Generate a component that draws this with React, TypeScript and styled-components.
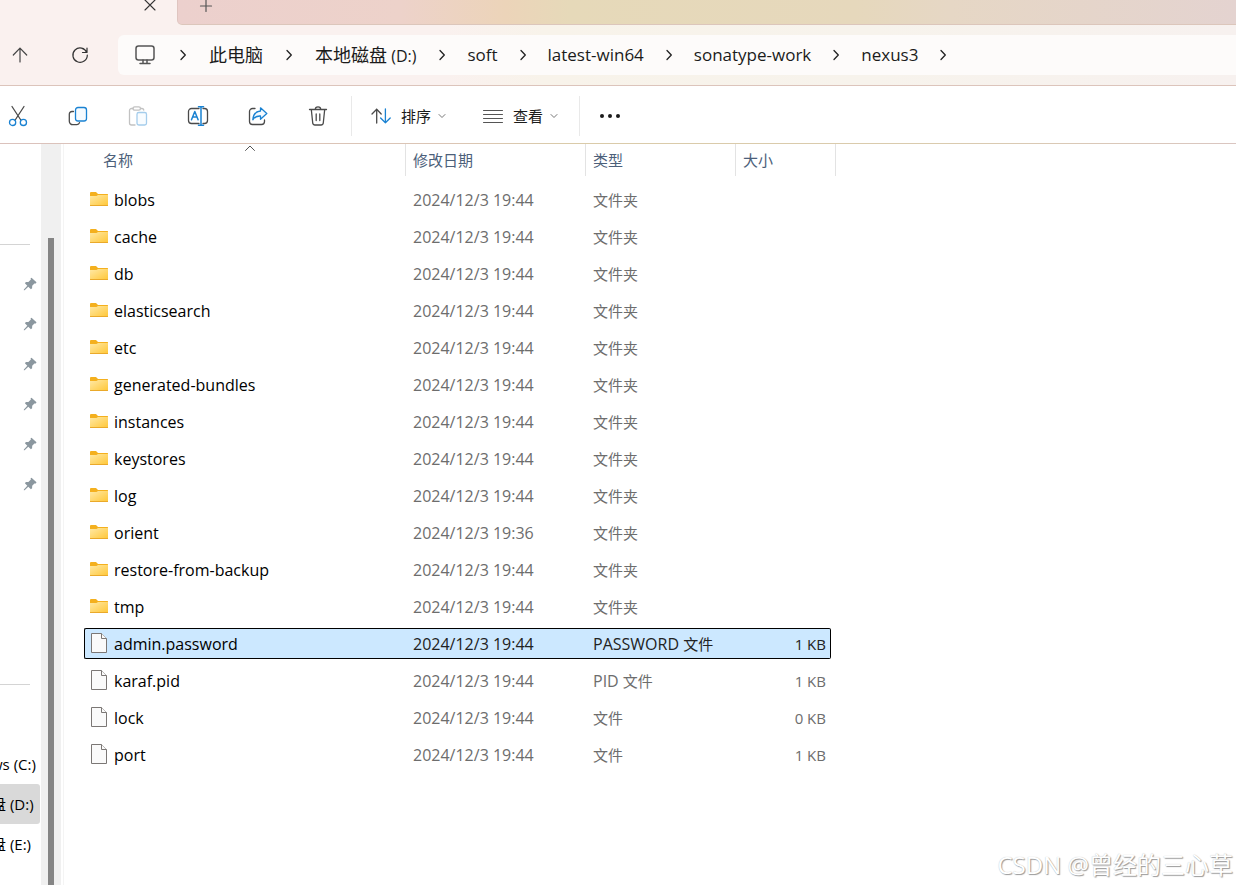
import React from "react";
import styled, { createGlobalStyle, css } from "styled-components";

const GlobalStyle = createGlobalStyle`
  * { box-sizing: border-box; }
  body {
    margin: 0;
    background: #fff;
    font-family: "Open Sans", "Noto Sans CJK SC", sans-serif;
    font-size: 15px;
    line-height: 20px;
    color: #000;
  }
  button { font: inherit; color: inherit; border: 0; background: none; padding: 0; }
  svg { display: block; flex: none; }
`;

const Window = styled.div`
  position: relative;
  min-height: 100vh;
  display: flex;
  flex-direction: column;
  overflow: hidden;
`;

const TabStrip = styled.header`
  display: flex;
  height: 25px;
  background: #faf1ef;
`;

const ActiveTab = styled.div`
  width: 177px;
  display: flex;
  align-items: flex-start;
  justify-content: flex-end;
  padding-right: 20px;
`;

const TabButton = styled.button`
  display: block;
  width: 14px;
  height: 12px;
`;

const TabRest = styled.div`
  flex: 1;
  display: flex;
  align-items: flex-start;
  padding-left: 21px;
  border-left: 1px solid #dfc5c0;
  border-bottom: 1px solid #dcc6bb;
  border-bottom-left-radius: 5px;
  background: linear-gradient(90deg, #ecd0cd 0, #edd2ca 21%, #ecd4b9 31%, #e6d9b9 37%, #e6d8bc 64%, #e6d7c5 73%, #e4d3d0 100%);
`;

const NavBar = styled.div`
  display: flex;
  align-items: center;
  height: 61px;
  background: linear-gradient(90deg, #faf1ef 0, #faf1ef 36%, #f8f3ea 44%, #f7f3ec 70%, #f7f1ef 100%);
  border-bottom: 1px solid #dcc4bb;
`;

const NavButton = styled.button`
  width: 40px;
  height: 40px;
  display: flex;
  align-items: center;
  justify-content: center;
`;

const NavButtons = styled.div`
  display: flex;
  gap: 20px;
  width: 118px;
`;

const AddressBar = styled.nav`
  flex: 1;
  height: 40px;
  display: flex;
  align-items: center;
  padding-left: 17px;
  background: #fdfbfa;
  border-radius: 6px 0 0 6px;
  white-space: nowrap;
  color: #1b1b1b;
`;

const Crumb = styled.a<{ $cjk?: boolean }>`
  margin: 0 ${(p) => (p.$cjk ? 22 : 21)}px;
  font-size: ${(p) => (p.$cjk ? 18 : 17)}px;
  line-height: 24px;
  color: inherit;
  text-decoration: none;
`;

const CrumbLatin = styled.span`
  font-size: 16px;
`;

const TypeLatin = styled.span`
  font-size: 16px;
`;

const ComputerButton = styled.button`
  margin-right: 24px;
`;

const Toolbar = styled.div`
  display: flex;
  align-items: center;
  height: 58px;
  padding-top: 2px;
  border-bottom: 1px solid;
  border-image: linear-gradient(90deg, #dbc2bc 0, #dbc5b5 36%, #dacba9 46%, #dacbad 75%, #dac6c1 100%) 1;
`;

const IconTools = styled.div`
  display: flex;
  margin: 0 3px 0 -12px;
`;

const ToolButton = styled.button`
  width: 60px;
  height: 40px;
  display: flex;
  align-items: center;
  justify-content: center;
`;

const Separator = styled.span`
  width: 1px;
  height: 40px;
  background: #e9e9e9;
`;

const MenuTools = styled.div`
  display: flex;
  gap: 37px;
  padding: 0 21px 0 19px;
`;

const MenuButton = styled.button`
  display: flex;
  align-items: center;
  height: 40px;
  gap: 10px;
  color: #1b1b1b;
`;

const MenuLabel = styled.span`
  display: flex;
  align-items: center;
  gap: 7px;
`;

const Main = styled.main`
  flex: 1;
  display: flex;
`;

const Sidebar = styled.aside`
  width: 41px;
  padding-top: 100px;
  overflow: hidden;
  white-space: nowrap;
`;

const SideRule = styled.hr`
  width: 30px;
  height: 1px;
  margin: 0;
  border: 0;
  background: #d4d4d4;
`;

const PinList = styled.div`
  padding: 19px 0 180px;
`;

const PinRow = styled.div`
  height: 40px;
  display: flex;
  align-items: center;
  justify-content: flex-end;
  padding-right: 4px;
`;

const DriveList = styled.div`
  padding-top: 59px;
`;

const Drive = styled.button<{ $current?: boolean }>`
  display: flex;
  align-items: center;
  width: 49px;
  height: 40px;
  margin-left: -9px;
  border-radius: 3px;
  background: ${(p) => (p.$current ? "#d9d9d9" : "transparent")};
`;

const ScrollTrack = styled.div`
  width: 20px;
  display: flex;
  justify-content: center;
  padding-top: 94px;
  background: #f0f0f0;
`;

const ScrollThumb = styled.div`
  width: 6px;
  background: #858585;
`;

const Content = styled.section`
  flex: 1;
  margin-left: 2px;
  padding-left: 20px;
  border-left: 1px solid #f4f4f4;
`;

const FileTable = styled.table`
  width: 752px;
  table-layout: fixed;
  border-collapse: collapse;
  th, td { padding: 0; font-weight: 400; text-align: left; }
`;

const Col = styled.col<{ $w: number }>`
  width: ${(p) => p.$w}px;
`;

const HeadCell = styled.div<{ $name?: boolean }>`
  position: relative;
  height: 32px;
  margin-bottom: 5px;
  display: flex;
  align-items: center;
  padding-left: ${(p) => (p.$name ? 19 : 7)}px;
  border-right: 1px solid #e3e3e3;
  color: #4c607a;
`;

const SortMark = styled.span`
  position: absolute;
  top: 1px;
  left: 161px;
`;

type CellKind = "name" | "date" | "type" | "size";

const Cell = styled.div<{ $kind: CellKind; $selected?: boolean }>`
  height: 31px;
  margin: 3px 0;
  display: flex;
  align-items: center;
  padding-left: 7px;
  color: ${(p) => (p.$kind === "name" ? "#000" : "#6d6d6d")};
  border: 0 solid #000;
  white-space: pre;
  ${(p) => p.$kind === "date" && css`font-size: 16px;`}
  ${(p) => p.$kind === "name" && css`
    font-size: 16px;
    padding-left: 5px;
    border-left: 1px solid transparent;
  `}
  ${(p) => p.$kind === "size" && css`
    margin-right: 5px;
    padding-right: 4px;
    justify-content: flex-end;
    border-right: 1px solid transparent;
  `}
  ${(p) => p.$selected && css`
    background: #cce8ff;
    color: ${p.$kind === "name" ? "#000" : "#222"};
    border-top: 1px solid #000;
    border-bottom: 1px solid #000;
    ${p.$kind === "name" && "border-left-color: #000; border-radius: 2px 0 0 2px;"}
    ${p.$kind === "size" && "border-right-color: #000; border-radius: 0 2px 2px 0;"}
  `}
`;

const IconSlot = styled.span`
  width: 24px;
  padding-bottom: 2px;
`;

const Watermark = styled.div`
  position: absolute;
  right: 3px;
  bottom: 4px;
  font-size: 24px;
  line-height: 32px;
  color: #fff;
  text-shadow: 1px 1px 1px #999, 0 0 1px #bbb;
`;

const Stroke = ({ w, h, children, color = "#4a4a4a", sw = 1.2 }: {
  w: number; h: number; children: React.ReactNode; color?: string; sw?: number;
}) => (
  <svg width={w} height={h} viewBox={`0 0 ${w} ${h}`} fill="none" stroke={color} strokeWidth={sw} strokeLinecap="round" strokeLinejoin="round" aria-hidden="true">
    {children}
  </svg>
);

const BLUE = "#1a82d2";

const Chevron = () => (
  <Stroke w={8} h={12} color="#222" sw={1.3}><path d="M2 1.5 6.3 6 2 10.5" /></Stroke>
);
const ChevronDown = () => (
  <Stroke w={8} h={8} color="#777" sw={1}><path d="M1 2.5 4 5.5 7 2.5" /></Stroke>
);

const CutIcon = () => (
  <Stroke w={20} h={22} sw={1.3}>
    <path d="M4 1.5 12.8 15M16 1.5 7.2 15" />
    <g stroke={BLUE}><circle cx="4.6" cy="17.4" r="3.1" /><circle cx="15.4" cy="17.4" r="3.1" /></g>
  </Stroke>
);
const CopyIcon = () => (
  <Stroke w={20} h={20} sw={1.3}>
    <path d="M5.5 5.5H4a2.7 2.7 0 0 0-2.7 2.7v7A3.5 3.5 0 0 0 4.8 18.7H9a2.7 2.7 0 0 0 2.5-2" />
    <rect x="7.5" y="1.5" width="11" height="13.5" rx="2.5" stroke={BLUE} fill="#f6fbff" />
  </Stroke>
);
const PasteIcon = () => (
  <Stroke w={20} h={20} color="#c2c2c2" sw={1.3}>
    <path d="M5 2.5H3.5a2 2 0 0 0-2 2V17a2 2 0 0 0 2 2H7M12.5 2.5H14A2 2 0 0 1 15.8 4" />
    <rect x="5" y=".8" width="7.5" height="3.4" rx="1.7" />
    <rect x="9" y="6.5" width="9.5" height="12.5" rx="1.8" stroke="#a5cdec" fill="#f8fcff" />
  </Stroke>
);
const RenameIcon = () => (
  <Stroke w={22} h={20} sw={1.3}>
    <path d="M12 2.5H4.5a3 3 0 0 0-3 3v9a3 3 0 0 0 3 3H12M16 2.5h1.5a3 3 0 0 1 3 3v9a3 3 0 0 1-3 3H16" />
    <g stroke={BLUE} strokeWidth="1.5"><path d="m4.5 13.8 3.3-8.3 3.3 8.3M5.6 11H10M14 .8v18.4M11.5.8h5M11.5 19.2h5" /></g>
  </Stroke>
);
const ShareIcon = () => (
  <Stroke w={20} h={20} sw={1.3}>
    <path d="M7 2.5H4.5a3 3 0 0 0-3 3v10a3 3 0 0 0 3 3h9a3 3 0 0 0 3-3V14" />
    <path d="M12.5 1.8 18.8 7.5l-6.3 5.7V10C9 9.800 6.500 11 4.800 13.800 5.200 8.500 8 5.500 12.500 5Z" stroke={BLUE} fill="#f4faff" />
  </Stroke>
);
const DeleteIcon = () => (
  <Stroke w={20} h={20} sw={1.3}>
    <path d="M1.5 3.5h17M7.3 3.3a2.7 2.500 0 0 1 5.400 0M3.300 3.500l1.400 13.300a2.300 2.300 0 0 0 2.300 2.200h6a2.300 2.300 0 0 0 2.300-2.200L16.700 3.500M8.200 8v6.500M11.800 8v6.500" />
  </Stroke>
);
const SortIcon = () => (
  <Stroke w={20} h={16} sw={1.3}>
    <path d="M5.7 15V1.2M1 6 5.7 1.2 10.2 6" />
    <path d="M14.4 1v13.8M9.6 10l4.8 4.8L19.2 10" stroke={BLUE} />
  </Stroke>
);
const ViewIcon = () => (
  <Stroke w={20} h={16} sw={1} color="#555">
    <path d="M.5 2.5h19M.5 6.5h19M.5 10.5h19M.5 14.5h19" />
  </Stroke>
);
const PinIcon = () => (
  <svg width="14" height="14" viewBox="0 0 14 14" fill="#8b979f" aria-hidden="true">
    <path d="M8.5.7 13.5 5.3 12.8 6.5 11.4 6.400 9.200 8.800 9.100 11.200 7.900 12.300 5.300 9.700 1.600 13.200.8 13.300.9 12.500 4.300 8.700 1.900 6.200 2.900 5 5.400 4.900 7.900 2.600 7.600 1.300Z" />
  </svg>
);
const FolderIcon = () => (
  <svg width="18" height="14" viewBox="0 0 18 14" aria-hidden="true">
    <defs>
      <linearGradient id="folder" x1="0" y1="0" x2="1" y2="1">
        <stop offset="0" stopColor="#ffe9a6" /><stop offset="1" stopColor="#ffc738" />
      </linearGradient>
    </defs>
    <path d="M0 1a1 1 0 0 1 1-1h5l2 2h9.500a.5.500 0 0 1 .5.500V6H0Z" fill="#f4b01e" />
    <path d="M0 4h6.500L8 3h10v10.500H0Z" fill="url(#folder)" />
    <path d="M0 13h18v.5a.5.500 0 0 1-.5.500H.5a.5.500 0 0 1-.5-.5Z" fill="#eaa92a" />
  </svg>
);
const FileIcon = () => (
  <svg width="18" height="20" viewBox="0 0 18 20" fill="#fafafa" stroke="#7b7775" aria-hidden="true">
    <path d="M1.5.5h10l5 5v14h-15Z" />
    <path d="M11.5.5v5h5" />
  </svg>
);

const DATE = "2024/12/3 19:44";
const folders = ["blobs", "cache", "db", "elasticsearch", "etc", "generated-bundles", "instances", "keystores", "log", "orient", "restore-from-backup", "tmp"];

type Row = { name: string; date: string; ext?: string; type: string; size?: string; folder?: boolean; selected?: boolean };

const rows: Row[] = [
  ...folders.map((name) => ({
    name, date: name === "orient" ? "2024/12/3 19:36" : DATE, type: "文件夹", folder: true,
  })),
  { name: "admin.password", date: DATE, ext: "PASSWORD ", type: "文件", size: "1 KB", selected: true },
  { name: "karaf.pid", date: DATE, ext: "PID ", type: "文件", size: "1 KB" },
  { name: "lock", date: DATE, type: "文件", size: "0 KB" },
  { name: "port", date: DATE, type: "文件", size: "1 KB" },
];

const tools = [
  { label: "剪切", Icon: CutIcon },
  { label: "复制", Icon: CopyIcon },
  { label: "粘贴", Icon: PasteIcon },
  { label: "重命名", Icon: RenameIcon },
  { label: "共享", Icon: ShareIcon },
  { label: "删除", Icon: DeleteIcon },
];

export default function App() {
  return (
    <Window>
      <GlobalStyle />
      <TabStrip>
        <ActiveTab>
          <TabButton aria-label="关闭标签页">
            <Stroke w={14} h={12} color="#333" sw={1.1}><path d="m2 0 10 10M12 0 2 10" /></Stroke>
          </TabButton>
        </ActiveTab>
        <TabRest>
          <TabButton aria-label="新建标签页">
            <Stroke w={14} h={12} color="#555"><path d="M1.5 6h11M7 0v11.5" /></Stroke>
          </TabButton>
        </TabRest>
      </TabStrip>

      <NavBar>
        <NavButtons>
          <NavButton aria-label="向上">
            <Stroke w={16} h={16} color="#444"><path d="M8 15V1.2M1.3 8 8 1.2 14.7 8" /></Stroke>
          </NavButton>
          <NavButton aria-label="刷新">
            <Stroke w={18} h={18} color="#333"><path d="M15.8 6.5A7.2 7.2 0 1 0 16.3 9M16 2v4.500h-4.500" /></Stroke>
          </NavButton>
        </NavButtons>
        <AddressBar aria-label="地址">
          <ComputerButton aria-label="此设备">
            <Stroke w={20} h={20} color="#555" sw={1.5}>
              <rect x="1" y="1" width="18" height="14" rx="2.5" /><path d="M8 15v3M12 15v3M5 18.500h10" />
            </Stroke>
          </ComputerButton>
          <Chevron />
          <Crumb href="#pc" $cjk>此电脑</Crumb>
          <Chevron />
          <Crumb href="#d" $cjk>本地磁盘<CrumbLatin> (D:)</CrumbLatin></Crumb>
          <Chevron />
          <Crumb href="#soft">soft</Crumb>
          <Chevron />
          <Crumb href="#latest">latest-win64</Crumb>
          <Chevron />
          <Crumb href="#work">sonatype-work</Crumb>
          <Chevron />
          <Crumb href="#nexus3">nexus3</Crumb>
          <Chevron />
        </AddressBar>
      </NavBar>

      <Toolbar>
        <IconTools>
          {tools.map(({ label, Icon }) => (
            <ToolButton key={label} aria-label={label}><Icon /></ToolButton>
          ))}
        </IconTools>
        <Separator />
        <MenuTools>
          <MenuButton><SortIcon /><MenuLabel>排序<ChevronDown /></MenuLabel></MenuButton>
          <MenuButton><ViewIcon /><MenuLabel>查看<ChevronDown /></MenuLabel></MenuButton>
        </MenuTools>
        <Separator />
        <ToolButton aria-label="更多">
          <svg width="20" height="6" viewBox="0 0 20 6" fill="#1b1b1b" aria-hidden="true">
            <circle cx="2" cy="3" r="2" /><circle cx="10" cy="3" r="2" /><circle cx="18" cy="3" r="2" />
          </svg>
        </ToolButton>
      </Toolbar>

      <Main>
        <Sidebar>
          <SideRule />
          <PinList>
            {[1, 2, 3, 4, 5, 6].map((n) => <PinRow key={n}><PinIcon /></PinRow>)}
          </PinList>
          <SideRule />
          <DriveList>
            <Drive>ws (C:)</Drive>
            <Drive $current>盘 (D:)</Drive>
            <Drive>盘 (E:)</Drive>
          </DriveList>
        </Sidebar>
        <ScrollTrack><ScrollThumb /></ScrollTrack>
        <Content>
          <FileTable>
            <colgroup><Col $w={322} /><Col $w={180} /><Col $w={150} /><Col $w={100} /></colgroup>
            <thead>
              <tr>
                <th scope="col">
                  <HeadCell $name>名称
                    <SortMark><Stroke w={10} h={6} color="#555" sw={1}><path d="M.5 5.500 5 1l4.500 4.500" /></Stroke></SortMark>
                  </HeadCell>
                </th>
                <th scope="col"><HeadCell>修改日期</HeadCell></th>
                <th scope="col"><HeadCell>类型</HeadCell></th>
                <th scope="col"><HeadCell>大小</HeadCell></th>
              </tr>
            </thead>
            <tbody>
              {rows.map((r) => (
                <tr key={r.name} aria-selected={r.selected}>
                  <td><Cell $kind="name" $selected={r.selected}><IconSlot>{r.folder ? <FolderIcon /> : <FileIcon />}</IconSlot>{r.name}</Cell></td>
                  <td><Cell $kind="date" $selected={r.selected}>{r.date}</Cell></td>
                  <td><Cell $kind="type" $selected={r.selected}>{r.ext && <TypeLatin>{r.ext}</TypeLatin>}{r.type}</Cell></td>
                  <td><Cell $kind="size" $selected={r.selected}>{r.size}</Cell></td>
                </tr>
              ))}
            </tbody>
          </FileTable>
        </Content>
      </Main>
      <Watermark>CSDN @曾经的三心草</Watermark>
    </Window>
  );
}
